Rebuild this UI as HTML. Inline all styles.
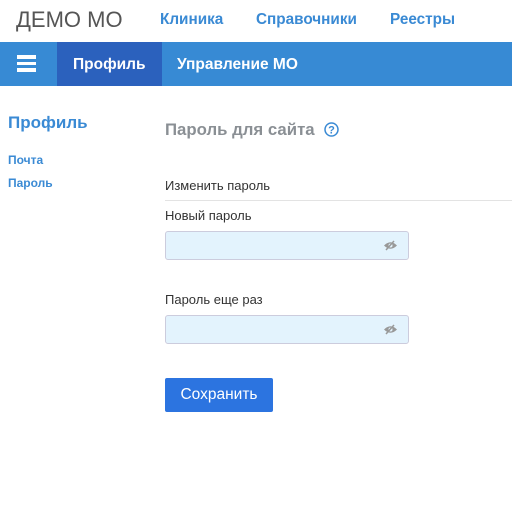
<!DOCTYPE html>
<html><head><meta charset="utf-8"><style>
*{margin:0;padding:0;box-sizing:border-box}
body{width:512px;height:515px;background:#fff;font-family:"Liberation Sans","Noto Sans CJK SC",sans-serif;position:relative;overflow:hidden}
.a{position:absolute;white-space:nowrap}
.logo{left:16px;top:7px;font-size:22px;color:#555}
.tn{top:11px;font-size:15.3px;font-weight:bold;color:#3a8ad4}
.bar{left:0;top:42px;width:512px;height:44px;background:#378ad4}
.act{left:57px;top:42px;width:105px;height:44px;background:#2b61bd}
.bt{top:55px;font-size:15.5px;font-weight:bold;color:#fff}
.hb{left:17px;width:19px;height:3.5px;background:#fff}
.side{color:#3a8ad4;font-weight:bold}
.lbl{font-size:13px;color:#333}
.inp{left:165px;width:244px;height:29px;background:#e3f3fd;border:1px solid #ccd;border-radius:3px}
</style></head><body>
<div class="a logo">ДЕМО МО</div>
<div class="a tn" style="left:160px">Клиника</div>
<div class="a tn" style="left:256px">Справочники</div>
<div class="a tn" style="left:390px">Реестры</div>
<div class="a bar"></div>
<div class="a act"></div>
<div class="a hb" style="top:55px"></div>
<div class="a hb" style="top:61.5px"></div>
<div class="a hb" style="top:68px"></div>
<div class="a bt" style="left:73px;top:56px">Профиль</div>
<div class="a bt" style="left:177px;top:56px">Управление МО</div>
<div class="a side" style="left:8px;top:113px;font-size:17px">Профиль</div>
<div class="a side" style="left:8px;top:153px;font-size:12px">Почта</div>
<div class="a side" style="left:8px;top:176px;font-size:12px">Пароль</div>
<div class="a" style="left:165px;top:120px;font-size:16.8px;font-weight:bold;color:#8a8f94">Пароль для сайта</div>
<svg class="a" style="left:324px;top:122px" width="15" height="15" viewBox="0 0 15 15"><circle cx="7.5" cy="7.5" r="6.5" fill="none" stroke="#3a8ad4" stroke-width="1.5"/><text x="7.5" y="11.5" font-size="11" font-weight="bold" text-anchor="middle" fill="#3a8ad4" font-family="Liberation Sans">?</text></svg>
<div class="a lbl" style="left:165px;top:178px">Изменить пароль</div>
<div class="a" style="left:165px;top:200px;width:347px;height:1px;background:#e3e3e3"></div>
<div class="a lbl" style="left:165px;top:208px">Новый пароль</div>
<div class="a inp" style="top:231px"></div>
<div class="a lbl" style="left:165px;top:292px">Пароль еще раз</div>
<div class="a inp" style="top:315px"></div>
<svg class="a" style="left:383px;top:240px" width="15" height="11" viewBox="0 0 15 11"><path d="M1 5.5Q7.5-1 14 5.5Q7.5 12 1 5.5Z" fill="#999"/><circle cx="7.5" cy="5.5" r="2" fill="#e3f3fd"/><path d="M3 10L11 1" stroke="#999" stroke-width="1.5"/></svg>
<svg class="a" style="left:383px;top:324px" width="15" height="11" viewBox="0 0 15 11"><path d="M1 5.5Q7.5-1 14 5.5Q7.5 12 1 5.5Z" fill="#999"/><circle cx="7.5" cy="5.5" r="2" fill="#e3f3fd"/><path d="M3 10L11 1" stroke="#999" stroke-width="1.5"/></svg>
<div class="a" style="left:165px;top:378px;width:108px;height:34px;background:#2c74e0;border-radius:2px;color:#fff;font-size:15.5px;line-height:34px;text-align:center">Сохранить</div>
</body></html>
